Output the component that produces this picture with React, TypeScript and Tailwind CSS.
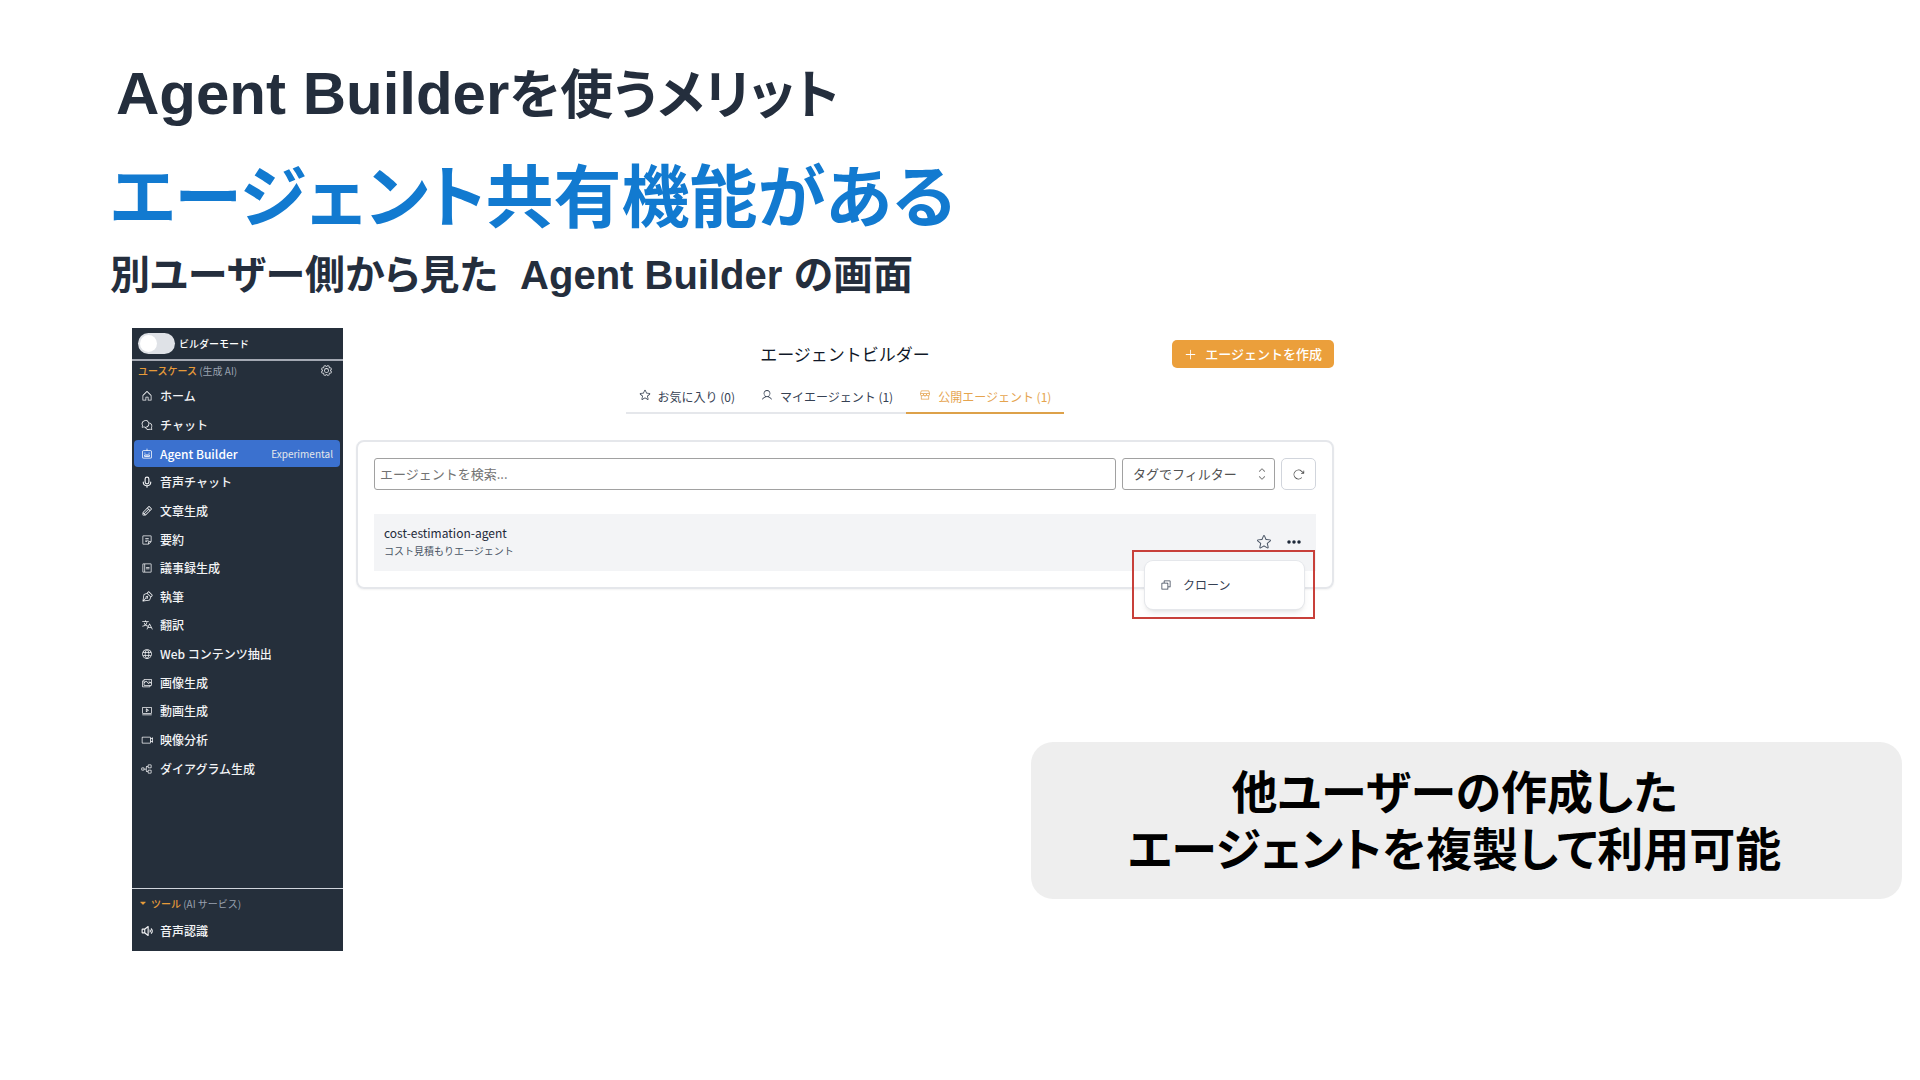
import type { IconType } from 'react-icons';
import {
  PiArrowClockwise,
  PiCaretDownFill,
  PiCaretUpDown,
  PiChatsCircle,
  PiCopy,
  PiDotsThreeOutlineFill,
  PiGear,
  PiGlobe,
  PiHouse,
  PiImages,
  PiMicrophoneBold,
  PiNote,
  PiNotebook,
  PiPenNib,
  PiPencil,
  PiPlus,
  PiRobot,
  PiSpeakerHighBold,
  PiStar,
  PiStorefront,
  PiTranslate,
  PiTreeStructure,
  PiUser,
  PiVideo,
  PiVideoCamera,
} from 'react-icons/pi';

interface MenuItem {
  label: string;
  icon: IconType;
  active?: boolean;
  tag?: string;
}

const useCases: MenuItem[] = [
  { label: 'ホーム', icon: PiHouse },
  { label: 'チャット', icon: PiChatsCircle },
  { label: 'Agent Builder', icon: PiRobot, active: true, tag: 'Experimental' },
  { label: '音声チャット', icon: PiMicrophoneBold },
  { label: '文章生成', icon: PiPencil },
  { label: '要約', icon: PiNote },
  { label: '議事録生成', icon: PiNotebook },
  { label: '執筆', icon: PiPenNib },
  { label: '翻訳', icon: PiTranslate },
  { label: 'Web コンテンツ抽出', icon: PiGlobe },
  { label: '画像生成', icon: PiImages },
  { label: '動画生成', icon: PiVideo },
  { label: '映像分析', icon: PiVideoCamera },
  { label: 'ダイアグラム生成', icon: PiTreeStructure },
];

const tabs: MenuItem[] = [
  { label: 'お気に入り (0)', icon: PiStar },
  { label: 'マイエージェント (1)', icon: PiUser },
  { label: '公開エージェント (1)', icon: PiStorefront, active: true },
];

function MenuLink({ item }: { item: MenuItem }) {
  const Icon = item.icon;
  return (
    <a
      href="#"
      className={`flex h-[27px] items-center rounded-sm px-[7px] text-[12px] leading-none font-medium ${
        item.active ? 'bg-[#3b71cf] text-white' : 'text-gray-100'
      }`}
    >
      <Icon className="mr-[7px] size-3 shrink-0" />
      {item.label}
      {item.tag && <span className="ml-auto text-[10px] font-normal text-gray-200">{item.tag}</span>}
    </a>
  );
}

function Sidebar() {
  return (
    <aside className="flex w-[211px] shrink-0 flex-col bg-[#252f3b]">
      <label className="flex h-[30px] items-center gap-1 pl-[6px] text-[10px] font-medium text-white">
        <input type="checkbox" role="switch" className="peer sr-only" />
        <span className="flex h-[21px] w-[37px] items-center rounded-full bg-[#dfe2e7] p-[2px]">
          <span className="size-[17px] rounded-full bg-white" />
        </span>
        ビルダーモード
      </label>

      <nav className="mt-px flex grow flex-col border-t-2 border-[#a4a9b3]">
        <div className="flex h-[18px] items-center justify-between pr-[10px] pl-[6px]">
          <h2 className="text-[10px] text-gray-400">
            <span className="font-medium text-[#e69b3a]">ユースケース</span> (生成 AI)
          </h2>
          <button type="button" aria-label="設定" className="text-gray-200">
            <PiGear className="size-[13px]" />
          </button>
        </div>
        <ul className="mt-[3px] flex h-[401px] flex-col pr-[3px] pl-[2px]">
          {useCases.map((item) => (
            <li key={item.label} className="flex flex-1 flex-col justify-center">
              <MenuLink item={item} />
            </li>
          ))}
        </ul>
      </nav>

      <nav className="h-[63px] border-t border-gray-300 px-[2px]">
        <h2 className="flex h-7 items-center gap-1 pl-[5px] text-[10px] text-gray-400">
          <PiCaretDownFill className="size-2 text-[#e69b3a]" />
          <span>
            <span className="font-medium text-[#e69b3a]">ツール</span> (AI サービス)
          </span>
        </h2>
        <MenuLink item={{ label: '音声認識', icon: PiSpeakerHighBold }} />
      </nav>
    </aside>
  );
}

function AgentRow() {
  return (
    <div className="relative mt-6 flex h-[57px] items-center justify-between bg-[#f3f4f6] pr-[14px] pb-[2px] pl-[10px]">
      <div>
        <h3 className="text-[12px] leading-[18px] text-gray-800">cost-estimation-agent</h3>
        <p className="text-[10px] leading-[18px] text-gray-600">コスト見積もりエージェント</p>
      </div>
      <div className="flex items-center gap-[14px] text-gray-600">
        <button type="button" aria-label="お気に入り">
          <PiStar className="size-4" />
        </button>
        <button type="button" aria-label="メニュー" className="text-gray-800">
          <PiDotsThreeOutlineFill className="size-4" />
        </button>
      </div>

      {/* Opened row menu with its highlight frame */}
      <div className="absolute top-[36px] right-px h-[69px] w-[183px] border-2 border-[#c8403a] py-[9px] pr-[9px] pl-[11px]">
        <div className="flex h-12 items-center rounded-lg bg-white pl-[15px] shadow-md ring-1 ring-gray-200">
          <button type="button" className="flex items-center gap-[11px] text-[12px] text-gray-700">
            <PiCopy className="size-3" />
            クローン
          </button>
        </div>
      </div>
    </div>
  );
}

function AgentBuilder() {
  return (
    <main className="w-full max-w-[978px]">
      <header className="grid grid-cols-[1fr_auto_1fr] items-center pt-3">
        <h1 className="col-start-2 text-[17px] leading-7 text-gray-900">エージェントビルダー</h1>
        <button
          type="button"
          className="flex h-7 items-center gap-2 justify-self-end rounded-[5px] bg-[#eb9f3b] px-3 text-[13px] font-medium whitespace-nowrap text-white"
        >
          <PiPlus className="size-[13px]" />
          エージェントを作成
        </button>
      </header>

      <div className="mt-[14px] flex justify-center">
        {tabs.map((tab) => (
          <button
            key={tab.label}
            type="button"
            className={`flex h-8 items-center gap-[7px] border-b-2 px-[13px] text-[12px] ${
              tab.active ? 'border-[#dda14a] text-[#e5a44f]' : 'border-gray-200 text-gray-700'
            }`}
          >
            <tab.icon className="mb-1 size-3" />
            {tab.label}
          </button>
        ))}
      </div>

      <section className="mt-[26px] rounded-lg border-2 border-gray-200 p-4 shadow-xs">
        <div className="flex h-8 gap-[6px] text-[13px]">
          <input
            type="text"
            aria-label="エージェントを検索"
            placeholder="エージェントを検索..."
            className="min-w-0 grow rounded-[3px] border border-neutral-400 px-[5px] text-gray-600 placeholder:text-neutral-500"
          />
          <div className="relative w-[153px]">
            <select
              aria-label="タグでフィルター"
              className="h-full w-full appearance-none rounded-[3px] border border-neutral-400 bg-white px-[10px] text-neutral-600"
            >
              <option>タグでフィルター</option>
            </select>
            <PiCaretUpDown className="pointer-events-none absolute top-[9px] right-[6px] size-[14px] text-neutral-500" />
          </div>
          <button
            type="button"
            aria-label="再読み込み"
            className="flex w-[35px] items-center justify-center rounded-[5px] border border-gray-300 text-neutral-600"
          >
            <PiArrowClockwise className="size-[13px]" />
          </button>
        </div>
        <AgentRow />
      </section>
    </main>
  );
}

export default function App() {
  return (
    <div className="min-h-screen bg-white pt-[58px] font-['Noto_Sans_CJK_JP',sans-serif]">
      <div className="pl-[110px] font-['Liberation_Sans','Noto_Sans_CJK_JP',sans-serif] font-bold text-[#242e3d] [font-feature-settings:'palt']">
        <h1 className="pl-[6px] text-[60px] leading-[72px]">
          Agent Builder<span className="text-[53px]">を使うメリット</span>
        </h1>
        <p className="mt-[23px] text-[68px] leading-[86px] text-[#127ad0]">エージェント共有機能がある</p>
        <p className="mt-[10px] text-[40px] leading-[48px]">別ユーザー側から見た&nbsp; Agent Builder の画面</p>
      </div>

      <div className="mt-[29px] flex min-h-[623px] pr-[18px] pl-[132px]">
        <Sidebar />
        <div className="flex min-w-0 grow flex-col pl-[13px]">
          <AgentBuilder />
          <div className="mt-[153px] ml-auto flex h-[157px] w-full max-w-[871px] items-center justify-center rounded-[22px] bg-[#eeeeee] pt-[2px] pr-6 text-center font-['Liberation_Sans','Noto_Sans_CJK_JP',sans-serif] text-[46px] leading-[57px] font-bold text-black [font-feature-settings:'palt']">
            <p>
              他ユーザーの作成した
              <br />
              エージェントを複製して利用可能
            </p>
          </div>
        </div>
      </div>
    </div>
  );
}
